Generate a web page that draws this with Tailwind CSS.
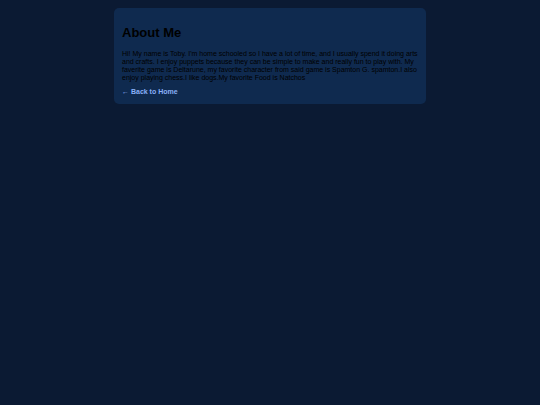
<!DOCTYPE html>
<html lang="en">
<head>
<meta charset="utf-8">
<meta name="viewport" content="width=device-width, initial-scale=1">
<title>About Me</title>
<script src="https://cdn.jsdelivr.net/npm/@tailwindcss/browser@4"></script>
</head>
<body class="min-h-screen bg-[#0b1a33] p-2 font-['Liberation_Sans',Arial,sans-serif] text-black">
<main class="mx-auto max-w-[312px] rounded-[5px] bg-[#0f2a4f] px-2 pt-4 pb-2">
<h1 class="text-[13px] leading-[18px] font-bold">About Me</h1>
<p class="mt-2 text-[7px] leading-[8px]">Hi! My name is Toby. I'm home schooled so I have a lot of time, and I usually spend it doing arts and crafts. I enjoy puppets because they can be simple to make and really fun to play with. My faverite game is Deltarune, my favorite character from said game is Spamton G. spamton.I also enjoy playing chess.I like dogs.My favorite Food is Natchos</p>
<a href="#" class="mt-1.5 block w-fit text-[7px] leading-[8px] font-bold text-[#8ab0f8]">← Back to Home</a>
</main>
</body>
</html>
